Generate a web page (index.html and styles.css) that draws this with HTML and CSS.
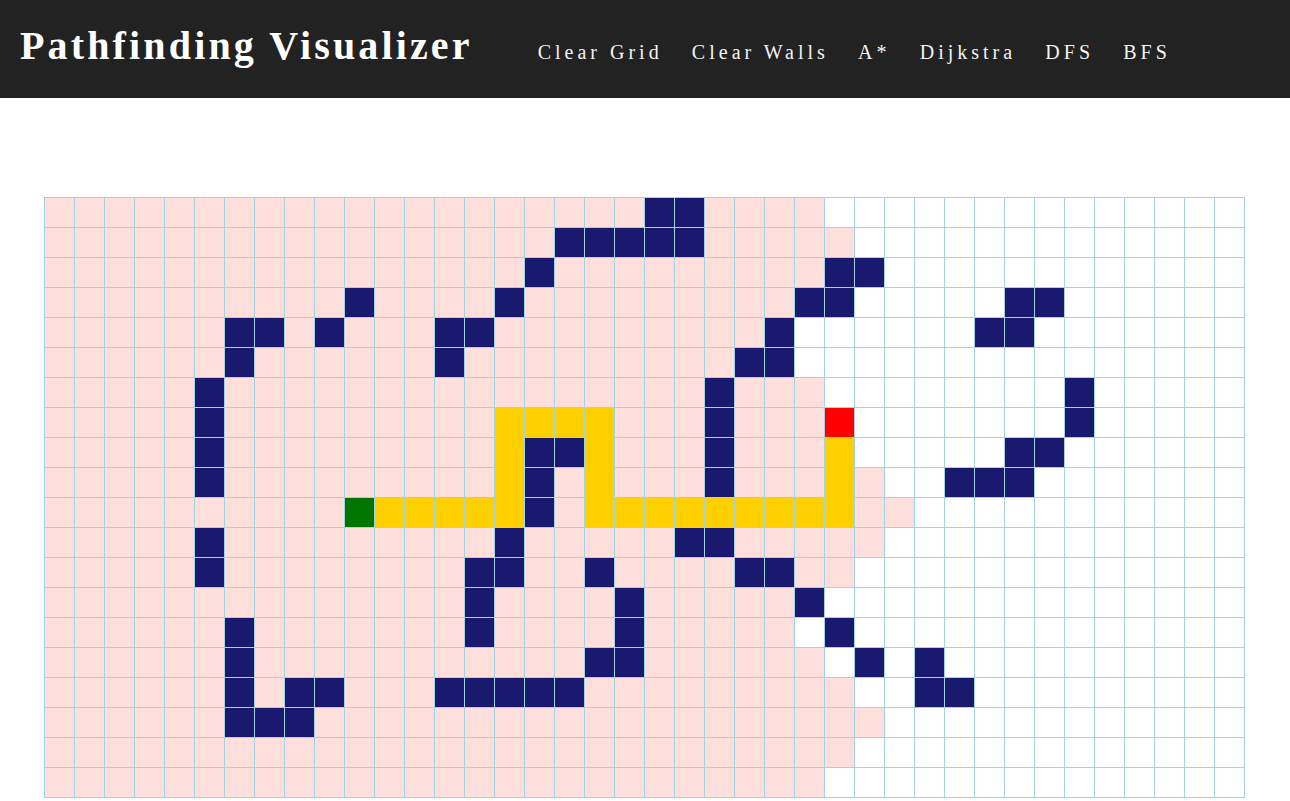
FILE: index.html
```html
<!DOCTYPE html>
<html lang="en">
<head>
<meta charset="utf-8">
<title>Pathfinding Visualizer</title>
<link rel="stylesheet" href="styles.css">
</head>
<body>
<header class="header">
  <h1 class="title">Pathfinding Visualizer</h1>
  <nav class="nav">
    <a href="#">Clear Grid</a>
    <a href="#">Clear Walls</a>
    <a href="#">A*</a>
    <a href="#">Dijkstra</a>
    <a href="#">DFS</a>
    <a href="#">BFS</a>
  </nav>
</header>
<main class="grid">
<!-- row 0 -->
<span class="v"></span><span class="v"></span><span class="v"></span><span class="v"></span><span class="v"></span><span class="v"></span><span class="v"></span><span class="v"></span><span class="v"></span><span class="v"></span>
<span class="v"></span><span class="v"></span><span class="v"></span><span class="v"></span><span class="v"></span><span class="v"></span><span class="v"></span><span class="v"></span><span class="v"></span><span class="v"></span>
<span class="w"></span><span class="w"></span>
<span class="v"></span><span class="v"></span><span class="v"></span><span class="v"></span>
<span></span><span></span><span></span><span></span><span></span><span></span><span></span><span></span><span></span><span></span><span></span><span></span><span></span><span></span>
<!-- row 1 -->
<span class="v"></span><span class="v"></span><span class="v"></span><span class="v"></span><span class="v"></span><span class="v"></span><span class="v"></span><span class="v"></span><span class="v"></span><span class="v"></span>
<span class="v"></span><span class="v"></span><span class="v"></span><span class="v"></span><span class="v"></span><span class="v"></span><span class="v"></span>
<span class="w"></span><span class="w"></span><span class="w"></span><span class="w"></span><span class="w"></span>
<span class="v"></span><span class="v"></span><span class="v"></span><span class="v"></span><span class="v"></span>
<span></span><span></span><span></span><span></span><span></span><span></span><span></span><span></span><span></span><span></span><span></span><span></span><span></span>
<!-- row 2 -->
<span class="v"></span><span class="v"></span><span class="v"></span><span class="v"></span><span class="v"></span><span class="v"></span><span class="v"></span><span class="v"></span><span class="v"></span><span class="v"></span>
<span class="v"></span><span class="v"></span><span class="v"></span><span class="v"></span><span class="v"></span><span class="v"></span>
<span class="w"></span>
<span class="v"></span><span class="v"></span><span class="v"></span><span class="v"></span><span class="v"></span><span class="v"></span><span class="v"></span><span class="v"></span><span class="v"></span>
<span class="w"></span><span class="w"></span>
<span></span><span></span><span></span><span></span><span></span><span></span><span></span><span></span><span></span><span></span><span></span><span></span>
<!-- row 3 -->
<span class="v"></span><span class="v"></span><span class="v"></span><span class="v"></span><span class="v"></span><span class="v"></span><span class="v"></span><span class="v"></span><span class="v"></span><span class="v"></span>
<span class="w"></span>
<span class="v"></span><span class="v"></span><span class="v"></span><span class="v"></span>
<span class="w"></span>
<span class="v"></span><span class="v"></span><span class="v"></span><span class="v"></span><span class="v"></span><span class="v"></span><span class="v"></span><span class="v"></span><span class="v"></span>
<span class="w"></span><span class="w"></span>
<span></span><span></span><span></span><span></span><span></span>
<span class="w"></span><span class="w"></span>
<span></span><span></span><span></span><span></span><span></span><span></span>
<!-- row 4 -->
<span class="v"></span><span class="v"></span><span class="v"></span><span class="v"></span><span class="v"></span><span class="v"></span>
<span class="w"></span><span class="w"></span>
<span class="v"></span>
<span class="w"></span>
<span class="v"></span><span class="v"></span><span class="v"></span>
<span class="w"></span><span class="w"></span>
<span class="v"></span><span class="v"></span><span class="v"></span><span class="v"></span><span class="v"></span><span class="v"></span><span class="v"></span><span class="v"></span><span class="v"></span>
<span class="w"></span>
<span></span><span></span><span></span><span></span><span></span><span></span>
<span class="w"></span><span class="w"></span>
<span></span><span></span><span></span><span></span><span></span><span></span><span></span>
<!-- row 5 -->
<span class="v"></span><span class="v"></span><span class="v"></span><span class="v"></span><span class="v"></span><span class="v"></span>
<span class="w"></span>
<span class="v"></span><span class="v"></span><span class="v"></span><span class="v"></span><span class="v"></span><span class="v"></span>
<span class="w"></span>
<span class="v"></span><span class="v"></span><span class="v"></span><span class="v"></span><span class="v"></span><span class="v"></span><span class="v"></span><span class="v"></span><span class="v"></span>
<span class="w"></span><span class="w"></span>
<span></span><span></span><span></span><span></span><span></span><span></span><span></span><span></span><span></span><span></span><span></span><span></span><span></span><span></span><span></span>
<!-- row 6 -->
<span class="v"></span><span class="v"></span><span class="v"></span><span class="v"></span><span class="v"></span>
<span class="w"></span>
<span class="v"></span><span class="v"></span><span class="v"></span><span class="v"></span><span class="v"></span><span class="v"></span><span class="v"></span><span class="v"></span><span class="v"></span><span class="v"></span>
<span class="v"></span><span class="v"></span><span class="v"></span><span class="v"></span><span class="v"></span><span class="v"></span>
<span class="w"></span>
<span class="v"></span><span class="v"></span><span class="v"></span>
<span></span><span></span><span></span><span></span><span></span><span></span><span></span><span></span>
<span class="w"></span>
<span></span><span></span><span></span><span></span><span></span>
<!-- row 7 -->
<span class="v"></span><span class="v"></span><span class="v"></span><span class="v"></span><span class="v"></span>
<span class="w"></span>
<span class="v"></span><span class="v"></span><span class="v"></span><span class="v"></span><span class="v"></span><span class="v"></span><span class="v"></span><span class="v"></span><span class="v"></span>
<span class="p"></span><span class="p"></span><span class="p"></span><span class="p"></span>
<span class="v"></span><span class="v"></span><span class="v"></span>
<span class="w"></span>
<span class="v"></span><span class="v"></span><span class="v"></span>
<span class="e"></span>
<span></span><span></span><span></span><span></span><span></span><span></span><span></span>
<span class="w"></span>
<span></span><span></span><span></span><span></span><span></span>
<!-- row 8 -->
<span class="v"></span><span class="v"></span><span class="v"></span><span class="v"></span><span class="v"></span>
<span class="w"></span>
<span class="v"></span><span class="v"></span><span class="v"></span><span class="v"></span><span class="v"></span><span class="v"></span><span class="v"></span><span class="v"></span><span class="v"></span>
<span class="p"></span>
<span class="w"></span><span class="w"></span>
<span class="p"></span>
<span class="v"></span><span class="v"></span><span class="v"></span>
<span class="w"></span>
<span class="v"></span><span class="v"></span><span class="v"></span>
<span class="p"></span>
<span></span><span></span><span></span><span></span><span></span>
<span class="w"></span><span class="w"></span>
<span></span><span></span><span></span><span></span><span></span><span></span>
<!-- row 9 -->
<span class="v"></span><span class="v"></span><span class="v"></span><span class="v"></span><span class="v"></span>
<span class="w"></span>
<span class="v"></span><span class="v"></span><span class="v"></span><span class="v"></span><span class="v"></span><span class="v"></span><span class="v"></span><span class="v"></span><span class="v"></span>
<span class="p"></span>
<span class="w"></span>
<span class="v"></span>
<span class="p"></span>
<span class="v"></span><span class="v"></span><span class="v"></span>
<span class="w"></span>
<span class="v"></span><span class="v"></span><span class="v"></span>
<span class="p"></span>
<span class="v"></span>
<span></span><span></span>
<span class="w"></span><span class="w"></span><span class="w"></span>
<span></span><span></span><span></span><span></span><span></span><span></span><span></span>
<!-- row 10 -->
<span class="v"></span><span class="v"></span><span class="v"></span><span class="v"></span><span class="v"></span><span class="v"></span><span class="v"></span><span class="v"></span><span class="v"></span><span class="v"></span>
<span class="s"></span>
<span class="p"></span><span class="p"></span><span class="p"></span><span class="p"></span><span class="p"></span>
<span class="w"></span>
<span class="v"></span>
<span class="p"></span><span class="p"></span><span class="p"></span><span class="p"></span><span class="p"></span><span class="p"></span><span class="p"></span><span class="p"></span><span class="p"></span>
<span class="v"></span><span class="v"></span>
<span></span><span></span><span></span><span></span><span></span><span></span><span></span><span></span><span></span><span></span><span></span>
<!-- row 11 -->
<span class="v"></span><span class="v"></span><span class="v"></span><span class="v"></span><span class="v"></span>
<span class="w"></span>
<span class="v"></span><span class="v"></span><span class="v"></span><span class="v"></span><span class="v"></span><span class="v"></span><span class="v"></span><span class="v"></span><span class="v"></span>
<span class="w"></span>
<span class="v"></span><span class="v"></span><span class="v"></span><span class="v"></span><span class="v"></span>
<span class="w"></span><span class="w"></span>
<span class="v"></span><span class="v"></span><span class="v"></span><span class="v"></span><span class="v"></span>
<span></span><span></span><span></span><span></span><span></span><span></span><span></span><span></span><span></span><span></span><span></span><span></span>
<!-- row 12 -->
<span class="v"></span><span class="v"></span><span class="v"></span><span class="v"></span><span class="v"></span>
<span class="w"></span>
<span class="v"></span><span class="v"></span><span class="v"></span><span class="v"></span><span class="v"></span><span class="v"></span><span class="v"></span><span class="v"></span>
<span class="w"></span><span class="w"></span>
<span class="v"></span><span class="v"></span>
<span class="w"></span>
<span class="v"></span><span class="v"></span><span class="v"></span><span class="v"></span>
<span class="w"></span><span class="w"></span>
<span class="v"></span><span class="v"></span>
<span></span><span></span><span></span><span></span><span></span><span></span><span></span><span></span><span></span><span></span><span></span><span></span><span></span>
<!-- row 13 -->
<span class="v"></span><span class="v"></span><span class="v"></span><span class="v"></span><span class="v"></span><span class="v"></span><span class="v"></span><span class="v"></span><span class="v"></span><span class="v"></span>
<span class="v"></span><span class="v"></span><span class="v"></span><span class="v"></span>
<span class="w"></span>
<span class="v"></span><span class="v"></span><span class="v"></span><span class="v"></span>
<span class="w"></span>
<span class="v"></span><span class="v"></span><span class="v"></span><span class="v"></span><span class="v"></span>
<span class="w"></span>
<span></span><span></span><span></span><span></span><span></span><span></span><span></span><span></span><span></span><span></span><span></span><span></span><span></span><span></span>
<!-- row 14 -->
<span class="v"></span><span class="v"></span><span class="v"></span><span class="v"></span><span class="v"></span><span class="v"></span>
<span class="w"></span>
<span class="v"></span><span class="v"></span><span class="v"></span><span class="v"></span><span class="v"></span><span class="v"></span><span class="v"></span>
<span class="w"></span>
<span class="v"></span><span class="v"></span><span class="v"></span><span class="v"></span>
<span class="w"></span>
<span class="v"></span><span class="v"></span><span class="v"></span><span class="v"></span><span class="v"></span>
<span></span>
<span class="w"></span>
<span></span><span></span><span></span><span></span><span></span><span></span><span></span><span></span><span></span><span></span><span></span><span></span><span></span>
<!-- row 15 -->
<span class="v"></span><span class="v"></span><span class="v"></span><span class="v"></span><span class="v"></span><span class="v"></span>
<span class="w"></span>
<span class="v"></span><span class="v"></span><span class="v"></span><span class="v"></span><span class="v"></span><span class="v"></span><span class="v"></span><span class="v"></span><span class="v"></span><span class="v"></span><span class="v"></span>
<span class="w"></span><span class="w"></span>
<span class="v"></span><span class="v"></span><span class="v"></span><span class="v"></span><span class="v"></span><span class="v"></span>
<span></span>
<span class="w"></span>
<span></span>
<span class="w"></span>
<span></span><span></span><span></span><span></span><span></span><span></span><span></span><span></span><span></span><span></span>
<!-- row 16 -->
<span class="v"></span><span class="v"></span><span class="v"></span><span class="v"></span><span class="v"></span><span class="v"></span>
<span class="w"></span>
<span class="v"></span>
<span class="w"></span><span class="w"></span>
<span class="v"></span><span class="v"></span><span class="v"></span>
<span class="w"></span><span class="w"></span><span class="w"></span><span class="w"></span><span class="w"></span>
<span class="v"></span><span class="v"></span><span class="v"></span><span class="v"></span><span class="v"></span><span class="v"></span><span class="v"></span><span class="v"></span><span class="v"></span>
<span></span><span></span>
<span class="w"></span><span class="w"></span>
<span></span><span></span><span></span><span></span><span></span><span></span><span></span><span></span><span></span>
<!-- row 17 -->
<span class="v"></span><span class="v"></span><span class="v"></span><span class="v"></span><span class="v"></span><span class="v"></span>
<span class="w"></span><span class="w"></span><span class="w"></span>
<span class="v"></span><span class="v"></span><span class="v"></span><span class="v"></span><span class="v"></span><span class="v"></span><span class="v"></span><span class="v"></span><span class="v"></span><span class="v"></span>
<span class="v"></span><span class="v"></span><span class="v"></span><span class="v"></span><span class="v"></span><span class="v"></span><span class="v"></span><span class="v"></span><span class="v"></span>
<span></span><span></span><span></span><span></span><span></span><span></span><span></span><span></span><span></span><span></span><span></span><span></span>
<!-- row 18 -->
<span class="v"></span><span class="v"></span><span class="v"></span><span class="v"></span><span class="v"></span><span class="v"></span><span class="v"></span><span class="v"></span><span class="v"></span><span class="v"></span>
<span class="v"></span><span class="v"></span><span class="v"></span><span class="v"></span><span class="v"></span><span class="v"></span><span class="v"></span><span class="v"></span><span class="v"></span><span class="v"></span>
<span class="v"></span><span class="v"></span><span class="v"></span><span class="v"></span><span class="v"></span><span class="v"></span><span class="v"></span>
<span></span><span></span><span></span><span></span><span></span><span></span><span></span><span></span><span></span><span></span><span></span><span></span><span></span>
<!-- row 19 -->
<span class="v"></span><span class="v"></span><span class="v"></span><span class="v"></span><span class="v"></span><span class="v"></span><span class="v"></span><span class="v"></span><span class="v"></span><span class="v"></span>
<span class="v"></span><span class="v"></span><span class="v"></span><span class="v"></span><span class="v"></span><span class="v"></span><span class="v"></span><span class="v"></span><span class="v"></span><span class="v"></span>
<span class="v"></span><span class="v"></span><span class="v"></span><span class="v"></span><span class="v"></span><span class="v"></span>
<span></span><span></span><span></span><span></span><span></span><span></span><span></span><span></span><span></span><span></span><span></span><span></span><span></span><span></span>
</main>
</body>
</html>
```
FILE: styles.css
```css
html, body {
  margin: 0;
  padding: 0;
  background: #ffffff;
  font-family: "Liberation Serif", "Times New Roman", serif;
}

.header {
  box-sizing: border-box;
  height: 98px;
  background: #222222;
  display: flex;
  align-items: baseline;
  padding: 22px 0 0 20px;
}

.title {
  margin: 0;
  font-size: 40px;
  font-weight: bold;
  letter-spacing: 3.15px;
  line-height: normal;
  color: #ffffff;
}

.nav {
  display: flex;
  align-items: baseline;
  gap: 29.2px;
  margin-left: 65px;
}

.nav a {
  color: #f4f4f4;
  font-size: 20px;
  letter-spacing: 4px;
  text-decoration: none;
}

.grid {
  width: max-content;
  margin: 99px 0 0 44px;
  display: grid;
  grid-template-columns: repeat(40, 29px);
  grid-auto-rows: 29px;
  gap: 1px;
  padding: 1px;
  background: #a3d3e3;
}

.grid > span {
  display: block;
  background: #ffffff;
}

.grid > .v { background: #ffdfdc; }
.grid > .w { background: #191970; }
.grid > .p { background: #ffd000; }
.grid > .s { background: #007500; }
.grid > .e { background: #ff0000; }
```
